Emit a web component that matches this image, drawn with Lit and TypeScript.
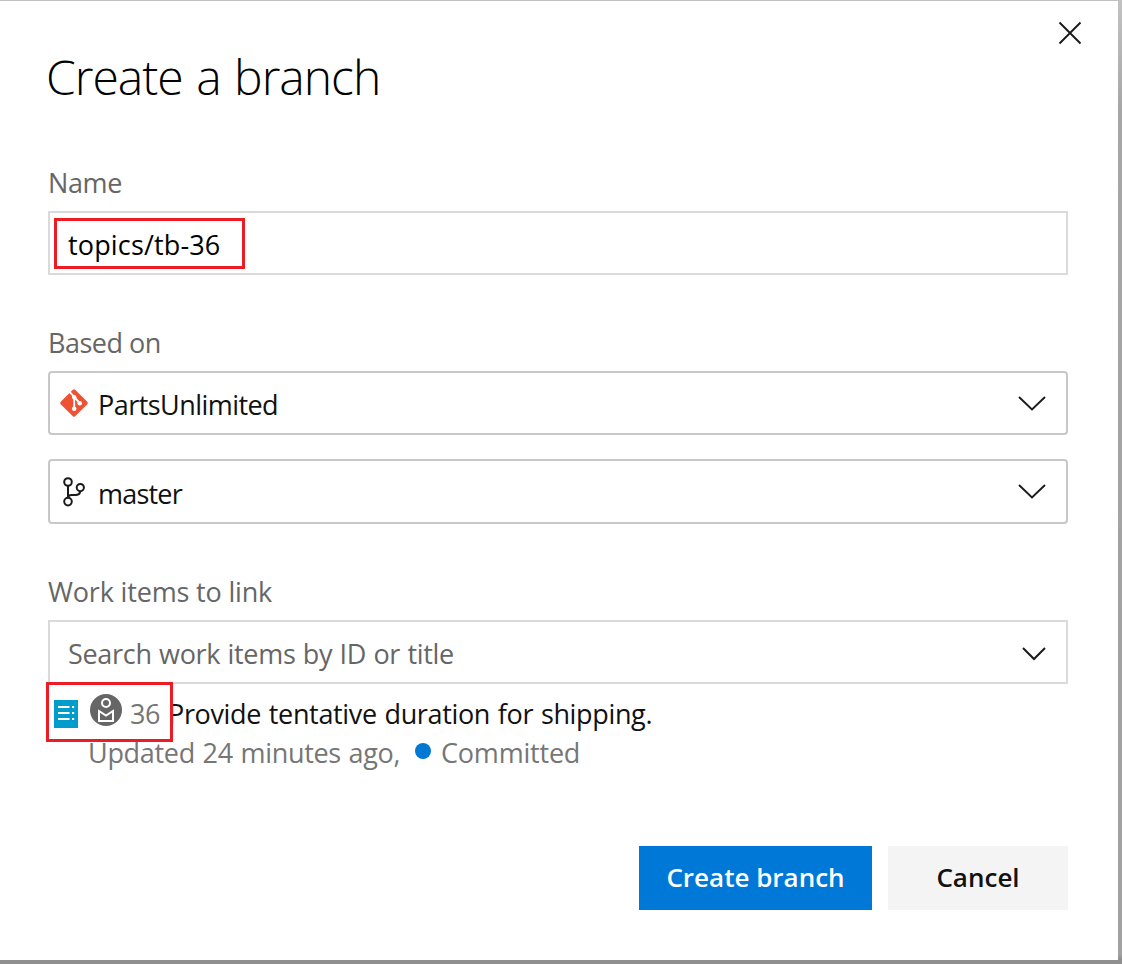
import { LitElement, html, css, svg } from "lit";
import { customElement } from "lit/decorators.js";

const chevron = (w: number, h: number, sw: number) => html`<svg class="chevron" width=${w + 2} height=${h + 2} viewBox="0 0 ${w + 2} ${h + 2}">
  ${svg`<path d="M1 1L${1 + w / 2} ${h}L${1 + w} 1" fill="none" stroke="#1a1a1a" stroke-width=${sw} />`}
</svg>`;

@customElement("app-root")
export class AppRoot extends LitElement {
  static styles = css`
    :host {
      display: block;
      box-sizing: border-box;
      width: 1122px;
      height: 964px;
      overflow: hidden;
      padding: 0 4px 4px 0;
      background: linear-gradient(to bottom, #c2c2c2 0, #a6a6a6 110px, #a2a2a2 700px, #a2a2a2 954px, #8f8f8f 960px);
      font: 27px/38px "Open Sans", "Noto Sans", sans-serif;
      color: #111;
    }
    * { box-sizing: border-box; }
    .dialog {
      display: flex;
      flex-direction: column;
      height: 960px;
      padding: 0 50px 0 48px;
      border-top: 1px solid #c0c0c0;
      background: #fff;
    }
    .header { display: flex; justify-content: space-between; height: 162px; margin-right: -14px; }
    .title { margin: 41px 0 0 -2px; font-weight: 300; font-size: 48px; line-height: 70px; letter-spacing: -1px; word-spacing: 2px; color: #000; white-space: nowrap; }
    .close { display: block; margin-top: 20px; }
    .label { height: 48px; padding-top: 1px; color: #666; white-space: nowrap; }
    .l-name { letter-spacing: -0.4px; }
    .l-based { letter-spacing: -0.5px; }
    .l-work { letter-spacing: -0.17px; }
    .field {
      position: relative;
      display: flex;
      align-items: center;
      height: 64px;
      border: 2px solid #dadada;
      padding: 0 18px;
      white-space: nowrap;
    }
    .field span { position: relative; top: 1.5px; flex: 1; }
    .field .t-name { letter-spacing: 0.15px; }
    .field .t-repo { letter-spacing: -0.55px; }
    .field .t-master { top: 2px; letter-spacing: -0.8px; }
    .field .t-search { letter-spacing: -0.3px; word-spacing: 0.6px; }
    .select { border-color: #c8c8c8; border-radius: 4px; padding: 0 20px 0 9px; }
    .select .chevron { margin-top: 1px; }
    .branch { height: 65px; margin-top: 24px; }
    .branch-icon { margin-right: 7px; }
    .git-icon { margin-right: 9px; }
    .name { color: #000; margin-bottom: 48px; }
    .mark { position: absolute; border: 3px solid #ed1c24; }
    .mark-name { left: 4px; top: 5px; width: 191px; height: 51px; }
    .mark-item { left: -2px; top: -2px; width: 127px; height: 60px; }
    .search { color: #666; padding-right: 20px; }
    .search .chevron { margin-top: 4px; }
    .gap { height: 48px; }
    .item { position: relative; height: 162px; white-space: nowrap; }
    .row { display: flex; align-items: flex-start; height: 50px; padding-left: 6px; }
    .backlog { margin-top: 16px; }
    .person { margin: 10px 8px 0 12px; }
    .row .id, .row .text { margin-top: 11px; }
    .id { width: 39px; color: #767676; letter-spacing: -0.5px; }
    .text { letter-spacing: -0.35px; word-spacing: 1.1px; margin-left: -1px; }
    .meta { display: flex; padding-left: 40px; color: #767676; }
    .updated { width: 327px; letter-spacing: -0.3px; word-spacing: 0.9px; }
    .state { letter-spacing: -0.2px; }
    .dot { width: 16px; height: 16px; margin: 9px 10px 0 0; border-radius: 50%; background: #0078d4; }
    .actions { display: flex; justify-content: flex-end; gap: 16px; }
    .button {
      width: 180px;
      height: 64px;
      border: 0;
      padding: 0 0 2px;
      font: 600 26px/38px "Open Sans", "Noto Sans", sans-serif;
      color: #111;
      background: #f4f4f4;
      white-space: nowrap;
    }
    .primary { width: 233px; color: #fff; background: #0078d7; }
  `;

  render() {
    return html`
      <div class="dialog">
        <div class="header">
          <h1 class="title">Create a branch</h1>
          <svg class="close" width="24" height="24" viewBox="0 0 24 24">
            <path d="M1.5 1.5L22.5 22.5M22.5 1.5L1.5 22.5" stroke="#1a1a1a" stroke-width="1.9" />
          </svg>
        </div>
        <div class="label l-name">Name</div>
        <div class="field name"><span class="t-name">topics/tb-36</span><div class="mark mark-name"></div></div>
        <div class="label l-based">Based on</div>
        <div class="field select">
          <svg class="git-icon" width="30" height="30" viewBox="0 0 30 30">
            <rect x="4.8" y="4.8" width="20.4" height="20.4" rx="1.6" transform="rotate(45 15 15)" fill="#f05133" />
            <path d="M10.6 3.8L15.2 8.8V20.4M15.2 9L20.6 14.8" fill="none" stroke="#fff" stroke-width="1.9" />
            <circle cx="15.2" cy="9.2" r="2.2" fill="#fff" />
            <circle cx="15.2" cy="20.8" r="2.3" fill="#fff" />
            <circle cx="20.7" cy="15.2" r="2.3" fill="#fff" />
          </svg>
          <span class="t-repo">PartsUnlimited</span>${chevron(26, 13.5, 1.9)}
        </div>
        <div class="field select branch">
          <svg class="branch-icon" width="32" height="32" viewBox="0 0 32 32">
            <g fill="none" stroke="#1a1a1a" stroke-width="2">
              <circle cx="9" cy="6" r="3.8" />
              <circle cx="9" cy="25.6" r="3.8" />
              <circle cx="21.3" cy="11.6" r="3.6" />
              <path d="M9 10V22M21.3 15.2C20.8 18 19.2 19 16.5 19H12.5C10.4 19 9 20 9 22" />
            </g>
          </svg>
          <span class="t-master">master</span>${chevron(26, 13.5, 1.9)}
        </div>
        <div class="gap"></div>
        <div class="label l-work">Work items to link</div>
        <div class="field search"><span class="t-search">Search work items by ID or title</span>${chevron(22, 12, 2)}</div>
        <div class="item">
          <div class="row">
            <svg class="backlog" width="24" height="28" viewBox="0 0 24 28">
              <rect width="24" height="28" fill="#009ccc" />
              <path d="M4 7H15.5M4 13H15.5M4 19H15.5M18 7H20.2M18 13H20.2M18 19H20.2" stroke="#fff" stroke-width="1.8" />
            </svg>
            <svg class="person" width="32" height="32" viewBox="0 0 32 32">
              <circle cx="16" cy="16" r="16" fill="#666" />
              <circle cx="16" cy="9" r="4" fill="none" stroke="#fff" stroke-width="2" />
              <path d="M9 17V27H23V17L16 21.6Z" fill="none" stroke="#fff" stroke-width="2" />
            </svg>
            <span class="id">36</span>
            <span class="text">Provide tentative duration for shipping.</span>
          </div>
          <div class="meta">
            <span class="updated">Updated 24 minutes ago,</span>
            <i class="dot"></i>
            <span class="state">Committed</span>
          </div>
          <div class="mark mark-item"></div>
        </div>
        <div class="actions">
          <button class="button primary">Create branch</button>
          <button class="button">Cancel</button>
        </div>
      </div>
    `;
  }
}
